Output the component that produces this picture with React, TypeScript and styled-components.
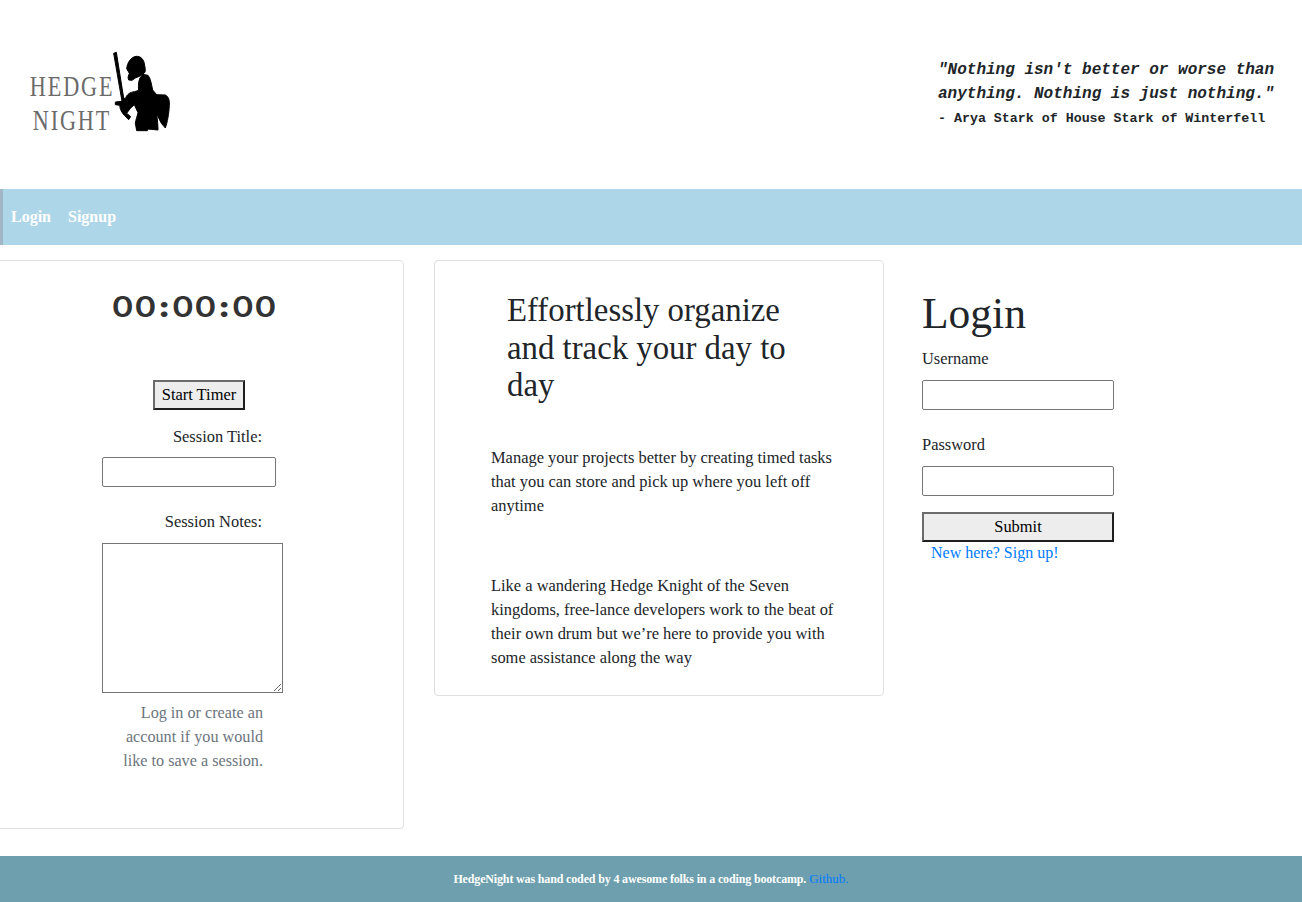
import React from "react";
import styled, { createGlobalStyle } from "styled-components";

const Global = createGlobalStyle`
  html, body { margin: 0; padding: 0; background: #fff; overflow-x: hidden; }
  body { font-family: "Liberation Serif", serif; font-size: 16.45px; line-height: 24px; color: #212529; }
  * { box-sizing: border-box; }
`;

const Page = styled.div`
  width: 1302px;
  height: 902px;
  display: flex;
  flex-direction: column;
  overflow: hidden;
`;

const Header = styled.header`
  height: 189px;
  display: flex;
  justify-content: space-between;
  padding: 52px 28px 0 30px;
`;

const Logo = styled.div`
  display: flex;
  align-items: flex-start;
  height: 82px;
`;

const LogoText = styled.div`
  padding-top: 17px;
  width: 84px;
  display: flex;
  flex-direction: column;
  align-items: center;
  font-size: 30px;
  line-height: 34px;
  letter-spacing: 2.5px;
  color: #6a6a6a;
  white-space: nowrap;
`;

const LogoLine = styled.span`
  flex: none;
  transform: scaleX(0.74);
`;

const Knight = styled.svg`
  flex: none;
  width: 68px;
  height: 88px;
  margin: -4px 0 0 -6px;
`;

const Quote = styled.div`
  padding-top: 6px;
  width: 336px;
  font-family: "Liberation Mono", monospace;
  font-weight: 700;
  color: #212529;
`;

const QuoteLine = styled.div`
  font-size: 16px;
  line-height: 24px;
  font-style: italic;
  white-space: nowrap;
`;

const Attribution = styled.div`
  font-size: 13.3px;
  line-height: 24px;
  padding-top: 1px;
  white-space: nowrap;
`;

const Nav = styled.nav`
  height: 56px;
  background: #aed6e9;
  border-left: 3px solid #a3b6c8;
  display: flex;
  align-items: center;
  gap: 17px;
  padding-left: 8px;
`;

const NavLink = styled.a`
  color: #fff;
  font-weight: 700;
  font-size: 16px;
`;

const Main = styled.main`
  flex: 1;
  display: flex;
  align-items: flex-start;
  padding-top: 15px;
  margin-left: -6px;
`;

const Card = styled.section`
  border: 1px solid #dfdfdf;
  border-radius: 4px;
  background: #fff;
`;

const TimerCard = styled(Card)`
  width: 410px;
  height: 569px;
  display: flex;
  flex-direction: column;
  padding: 30px 0 0 107px;
`;

const Clock = styled.div`
  width: 175px;
  margin-left: 5px;
  height: 32px;
  font-family: "Inter", sans-serif;
  font-size: 28px;
  font-weight: 600;
  line-height: 32px;
  letter-spacing: 0.7px;
  color: #333;
  text-align: center;
  white-space: nowrap;
  transform: scaleX(1.18);
`;

const ClockColon = styled.span`
  font-weight: 900;
  margin: 0 0.7px;
`;

const Btn = styled.button`
  font-family: "Liberation Serif", serif;
  font-size: 16.45px;
  height: 30px;
  padding: 0;
  background: #ededed;
  color: #000;
  border: 2px solid;
  border-color: #6b6b6b #1f1f1f #1f1f1f #6b6b6b;
`;

const StartBtn = styled(Btn)`
  width: 92px;
  margin: 57px 0 0 51px;
`;

const SideLabel = styled.label<{ $mt: number }>`
  display: block;
  width: 160px;
  margin-top: ${(p) => p.$mt}px;
  text-align: right;
  white-space: nowrap;
`;

const Input = styled.input<{ $w: number }>`
  display: block;
  width: ${(p) => p.$w}px;
  height: 30px;
  border: 1px solid #767676;
  border-radius: 2px;
  background: #fff;
  padding: 1px 2px;
`;

const TitleInput = styled(Input)`
  margin-top: 8px;
`;

const Notes = styled.textarea`
  display: block;
  width: 181px;
  height: 150px;
  margin-top: 9px;
  border: 1px solid #767676;
  background: #fff;
`;

const Muted = styled.p`
  width: 161px;
  margin: 8px 0 0;
  color: #6c757d;
  text-align: right;
  font-size: 16.2px;
`;

const InfoCard = styled(Card)`
  width: 450px;
  height: 436px;
  margin-left: 30px;
  padding: 31px 40px 0 56px;
`;

const Headline = styled.h2`
  margin: 0 0 0 16px;
  width: 310px;
  font-weight: 400;
  font-size: 32.8px;
  line-height: 37.5px;
  color: #212529;
`;

const Para = styled.p<{ $mt: number }>`
  margin: ${(p) => p.$mt}px 0 0;
`;

const LoginCol = styled.section`
  width: 192px;
  margin-left: 38px;
  padding-top: 29px;
`;

const LoginTitle = styled.h1`
  margin: 0;
  font-weight: 400;
  font-size: 43.5px;
  line-height: 48px;
`;

const FieldLabel = styled.label<{ $mt: number }>`
  display: block;
  margin-top: ${(p) => p.$mt}px;
  line-height: 24px;
`;

const LoginInput = styled(Input)`
  margin-top: 9px;
`;

const SubmitBtn = styled(Btn)`
  display: block;
  width: 192px;
  margin-top: 16px;
`;

const SignUp = styled.a`
  display: block;
  margin: -1px 0 0 9px;
  color: #007bff;
  font-size: 16px;
`;

const Footer = styled.footer`
  height: 46px;
  background: #6d9fae;
  color: #fff;
  font-size: 12px;
  font-weight: 700;
  letter-spacing: -0.15px;
  display: flex;
  align-items: center;
  justify-content: center;
  gap: 3px;
`;

const FooterLink = styled.a`
  color: #007bff;
  font-weight: 400;
  font-size: 13px;
  letter-spacing: 0;
`;

export default function App() {
  return (
    <>
      <Global />
      <Page>
        <Header>
          <Logo>
            <LogoText>
              <LogoLine>HEDGE</LogoLine>
              <LogoLine>NIGHT</LogoLine>
            </LogoText>
            <Knight viewBox="0 0 204 264" aria-hidden="true">
              <g fill="#000" stroke="#000" strokeWidth="3" strokeLinejoin="round">
                <path d="M17 16 L25 13 L47 150 L52 152 C56 140 66 132 80 131 L92 127 C90 112 92 98 96 90 L104 79 L120 82 C128 92 130 108 134 126 L146 140 L172 141 C182 146 185 156 184 172 C183 196 178 224 172 240 L160 226 L146 198 C148 214 150 232 150 246 L120 243 L118 248 L86 248 L82 226 C84 212 88 204 90 194 L79 170 L66 182 L56 196 L68 206 L62 215 L50 203 C42 196 36 184 35 172 L22 170 L22 162 L42 160 Z" />
                <path d="M56 62 C58 44 68 28 84 25 C98 24 108 34 110 52 C112 62 113 70 110 74 L96 84 L82 90 L72 97 L62 96 L60 88 L64 76 Z" />
              </g>
            </Knight>
          </Logo>
          <Quote>
            <QuoteLine>"Nothing isn't better or worse than</QuoteLine>
            <QuoteLine>anything. Nothing is just nothing."</QuoteLine>
            <Attribution>- Arya Stark of House Stark of Winterfell</Attribution>
          </Quote>
        </Header>
        <Nav>
          <NavLink>Login</NavLink>
          <NavLink>Signup</NavLink>
        </Nav>
        <Main>
          <TimerCard>
            <Clock>
              00<ClockColon>:</ClockColon>00<ClockColon>:</ClockColon>00
            </Clock>
            <StartBtn>Start Timer</StartBtn>
            <SideLabel $mt={15}>Session Title:</SideLabel>
            <TitleInput $w={174} />
            <SideLabel $mt={23}>Session Notes:</SideLabel>
            <Notes />
            <Muted>
              Log in or create an account if you would like to save a session.
            </Muted>
          </TimerCard>
          <InfoCard>
            <Headline>Effortlessly organize and track your day to day</Headline>
            <Para $mt={41}>
              Manage your projects better by creating timed tasks that you can store and pick up where you left off anytime
            </Para>
            <Para $mt={56}>
              Like a wandering Hedge Knight of the Seven kingdoms, free-lance developers work to the beat of their own drum but we’re here to provide you with some assistance along the way
            </Para>
          </InfoCard>
          <LoginCol>
            <LoginTitle>Login</LoginTitle>
            <FieldLabel $mt={10}>Username</FieldLabel>
            <LoginInput $w={192} />
            <FieldLabel $mt={23}>Password</FieldLabel>
            <LoginInput $w={192} />
            <SubmitBtn>Submit</SubmitBtn>
            <SignUp>New here? Sign up!</SignUp>
          </LoginCol>
        </Main>
        <Footer>
          <span>HedgeNight was hand coded by 4 awesome folks in a coding bootcamp.</span>
          <FooterLink>Github.</FooterLink>
        </Footer>
      </Page>
    </>
  );
}
